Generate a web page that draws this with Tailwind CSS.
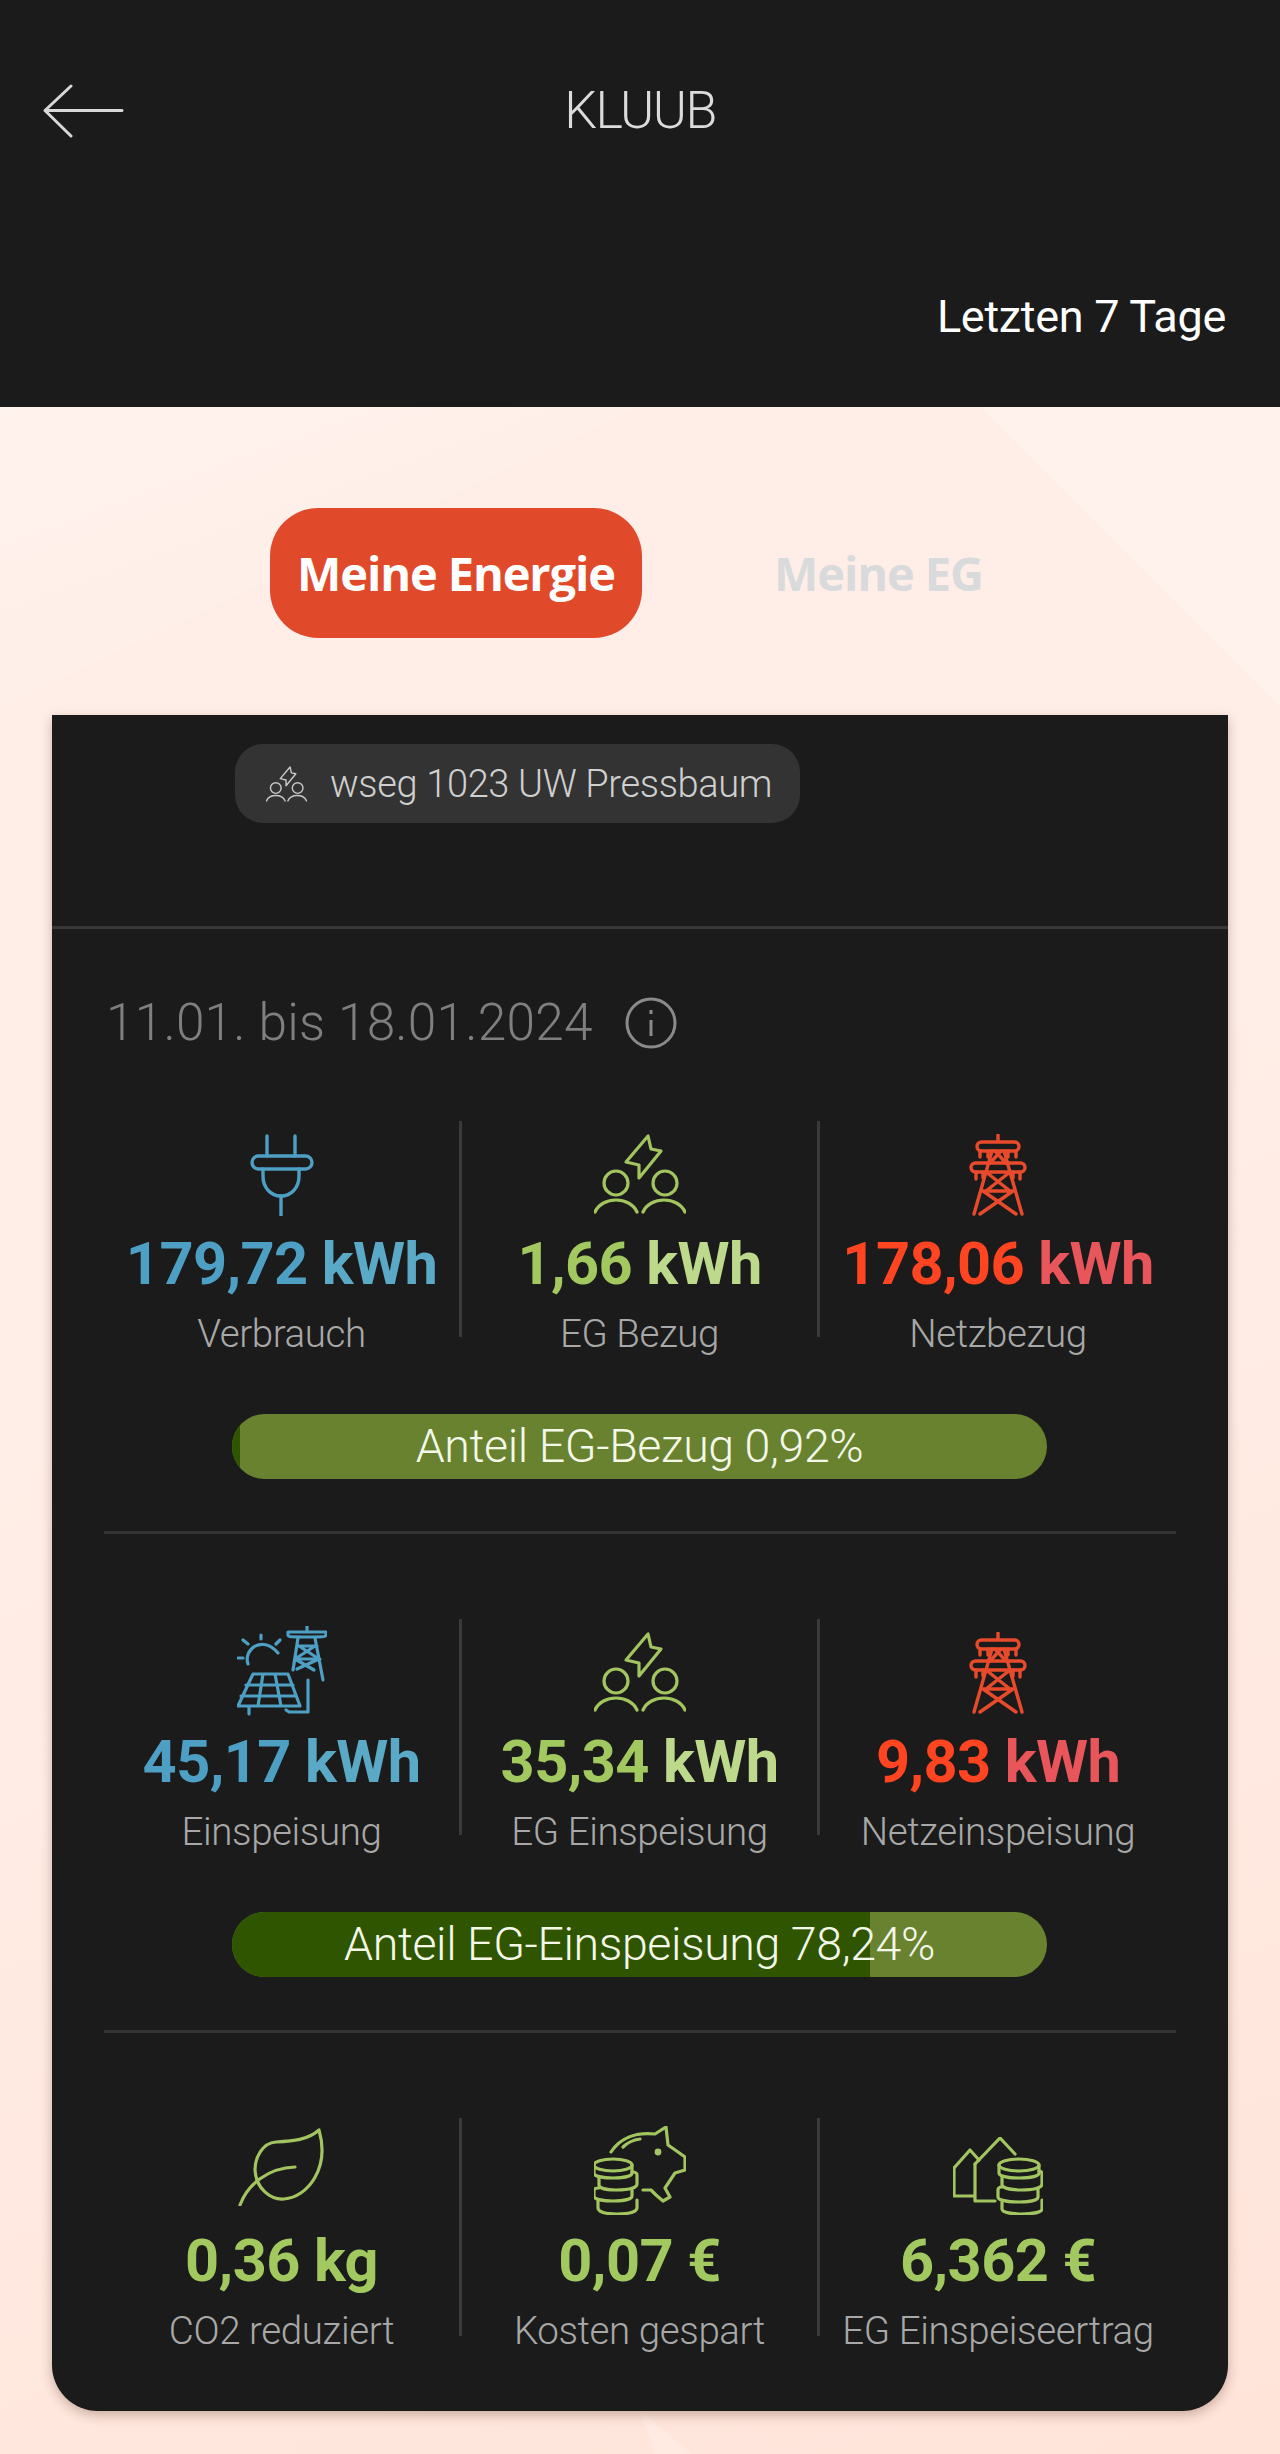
<!DOCTYPE html>
<html><head><meta charset="utf-8"><script src="https://cdn.jsdelivr.net/npm/@tailwindcss/browser@4"></script></head>
<body class="m-0">
<svg width="0" height="0" class="absolute">
<symbol id="people" viewBox="0 0 92 80"><g fill="none" stroke="currentColor" stroke-width="3.2" stroke-linecap="round" stroke-linejoin="round"><path d="M54 2 L32 28 L45 31 L45 44 L67 17 L57 15 Z"/><circle cx="22" cy="49" r="12"/><circle cx="71" cy="49" r="12"/><path d="M1 78 C8 62 36 62 43 78"/><path d="M49 78 C56 62 84 62 91 78"/></g></symbol>
<symbol id="tower" viewBox="0 0 58 82"><g fill="none" stroke="currentColor" stroke-width="3.4" stroke-linecap="round" stroke-linejoin="round"><path d="M29 1 V7"/><rect x="8" y="8" width="42" height="9" rx="4.5"/><rect x="2" y="29" width="54" height="9" rx="4.5"/><path d="M11 17 V23 M47 17 V23 M19 17 V23 M39 17 V23 M7 38 V45 M51 38 V45 M14 38 V44 M44 38 V44"/><path d="M23 17 L5 80 M35 17 L53 80"/><path d="M26 17 L37 29 M32 17 L21 29 M17 38 L41 57 M41 38 L17 57 M14 57 H44 M14 57 L47 80 M44 57 L11 80"/></g></symbol>
<symbol id="plug" viewBox="0 0 64 82"><g fill="none" stroke="currentColor" stroke-width="3.4" stroke-linecap="round" stroke-linejoin="round"><path d="M17 2 V22 M45 2 V22"/><rect x="2" y="22" width="60" height="13" rx="6.5"/><path d="M13 35 V42 C13 54 21 62 31 62 C41 62 49 54 49 42 V35"/><path d="M31 62 V81"/></g></symbol>
<symbol id="solar" viewBox="0 0 90 90"><g fill="none" stroke="currentColor" stroke-width="3.2" stroke-linecap="round" stroke-linejoin="round"><path d="M11 38 C6 24 25 8 41 27"/><path d="M1 32 H6 M6 14 L11 18 M24 9 V13 M43 14 L39 18"/><path d="M16 48 H51 L63 80 H1 Z M9 59 H56 M4 70 H59 M26 48 L21 80 M38 48 L44 80 M12 80 V88"/><path d="M49 84 L52 86 H71 V54"/><path d="M51 6 H89 V9 C89 11 85 11 70 11 C55 11 51 11 51 9 Z M70 0 V6"/><path d="M61 12 L56 44 M78 12 L86 54 M60 20 H80 M58 33 H83 M62 20 L82 33 M78 20 L58 33 M58 33 L77 44 M82 33 L60 43"/></g></symbol>
<symbol id="leaf" viewBox="0 0 88 78"><g fill="none" stroke="currentColor" stroke-width="3.2" stroke-linecap="round" stroke-linejoin="round"><path d="M81 2 C70 12 55 13 38 14 C24 15 17 30 17 42 C18 60 32 72 46 71 C70 69 92 40 81 2 Z"/><path d="M2 77 C10 56 30 40 57 39"/></g></symbol>
<symbol id="pig" viewBox="0 0 92 89"><g fill="none" stroke="currentColor" stroke-width="3.2" stroke-linecap="round" stroke-linejoin="round"><path d="M17 26 C26 12 42 6 61 8 L72 1 L74 19 L84 26 L91 31 V44 L81 47 L71 62 L76 71 L69 75 L62 69 L57 64 H49"/><path d="M29 21 C33 17 39 14 46 13"/><circle cx="64" cy="26" r="1.800" fill="currentColor"/><ellipse cx="19" cy="39" rx="19" ry="6"/><path d="M0 39 V47 C0 50 8 52 19 52 C30 52 38 50 38 47 V39"/><path d="M38 46 C41 46 43 47 43 49 V58 C43 62 34 64 22 64 C12 64 5 62 5 59 V52"/><path d="M5 62 C1 62 0 63 0 65 V70 C0 73 8 75 19 75 C30 75 38 73 38 70 V64"/><path d="M4 75 V82 C4 86 12 88 23 88 C34 88 43 86 43 82 V74"/></g></symbol>
<symbol id="house" viewBox="0 0 90 78"><g fill="none" stroke="currentColor" stroke-width="3.2" stroke-linecap="round" stroke-linejoin="round"><path d="M1 31 L17 13 L26 23"/><path d="M22 27 L47 1 L62 17"/><path d="M1 31 V59 H22 M22 27 V64 H42"/><ellipse cx="66" cy="28" rx="20" ry="6"/><path d="M46 28 V36 C46 39 54 41 66 41 C78 41 86 39 86 36 V28"/><path d="M86 34 C88 34 89 35 89 37 V47 C89 51 80 53 68 53 C58 53 50 51 49 48 V41"/><path d="M49 50 C46 50 45 51 45 53 V60 C45 63 54 65 66 65 C78 65 85 63 85 60 V52"/><path d="M49 65 V72 C49 75 57 77 68 77 C80 77 89 75 89 72 V63"/></g></symbol>
</svg>

<div class="relative w-[1280px] h-[2454px] overflow-hidden bg-[linear-gradient(160deg,#fff8f4_0%,#ffeee7_22%,#ffeee7_50%,#ffe4d9_100%)] font-['Roboto',sans-serif]">
<svg class="absolute left-0 top-[407px]" width="1280" height="2047" viewBox="0 0 1280 2047"><polygon points="980,0 1280,0 1280,300" fill="#fff" opacity=".22"/><polygon points="0,0 640,0 0,300" fill="#fff" opacity=".1"/><polygon points="640,2004 692,2047 655,2047" fill="#fff" opacity=".2"/></svg>

<header class="relative h-[407px] bg-[#1b1b1b] text-white">
  <div class="h-[222px] flex items-center justify-center relative">
    <svg class="absolute left-[42px] top-[84px]" width="82" height="54" viewBox="0 0 82 54"><path d="M80 26.500 H3 M29 2 L3 26.500 L29 52" fill="none" stroke="#d8d8d8" stroke-width="3" stroke-linecap="round" stroke-linejoin="round"/></svg>
    <span class="text-[52px] leading-none font-light text-[#dcdcdc] tracking-[-1.5px]">KLUUB</span>
  </div>
  <div class="pr-[54px] mt-[72px] text-right text-[45px] leading-none font-normal text-white tracking-[-0.3px]">Letzten 7 Tage</div>
</header>

<div class="relative flex pl-[270px] pt-[101px]">
  <div class="w-[372px] h-[130px] rounded-[48px] bg-[#e04a2b] flex items-center justify-center font-['Open_Sans',sans-serif] font-bold text-[47px] tracking-[-1.100px] text-white">Meine Energie</div>
  <div class="ml-[132px] h-[130px] flex items-center font-['Open_Sans',sans-serif] font-bold text-[47px] tracking-[-1.100px] text-[#d8dadb]">Meine EG</div>
</div>

<main class="relative mx-[52px] mt-[77px] w-[1176px] h-[1696px] bg-[#1b1b1b] rounded-b-[46px] shadow-[0_4px_12px_rgba(80,40,20,0.3)]">
  <div class="h-[214px] border-b-[3px] border-[#383838] pt-[29px] pl-[183px]">
    <div class="w-[565px] h-[79px] rounded-[28px] bg-[#333333] flex items-center pl-[31px] text-[#cfcfcf]">
      <svg width="41" height="36" class="text-[#c8c8c8]"><use href="#people"/></svg>
      <span class="ml-[23px] text-[38px] leading-none font-light tracking-[-0.35px]">wseg 1023 UW Pressbaum</span>
    </div>
  </div>
  <div class="flex items-center h-[94px] mt-[47px] pl-[54px]">
    <span class="text-[51.4px] leading-none font-light text-[#7f7f7f] tracking-[0.2px]">11.01. bis 18.01.2024</span>
    <svg class="ml-[32px]" width="52" height="52" viewBox="0 0 52 52" fill="none" stroke="#8a8a8a" stroke-width="3"><circle cx="26" cy="26" r="24"/><path d="M26 23 V39 M26 13 V17"/></svg>
  </div>

  <section class="ml-[52px] mt-[51px] w-[1072px] h-[413px] border-b-[3px] border-[#333333]">
    <div class="flex h-[216px]">
      <div class="w-[358px] border-r-[3px] border-[#3a3a3a] flex flex-col items-center"><div class="h-[114px] shrink-0 pt-[13px]"><svg width="64" height="82" class="text-[#4d9fc4]"><use href="#plug"/></svg></div><div class="shrink-0 text-[59.5px] leading-none font-bold tracking-[-0.6px] whitespace-nowrap text-[#4d9fc4]">179,72 <span class="text-[#5aa9c7]">kWh</span></div><div class="shrink-0 mt-[20px] text-[38.5px] leading-none font-light text-[#a8a8a8] tracking-[-0.4px] whitespace-nowrap">Verbrauch</div></div>
      <div class="w-[358px] border-r-[3px] border-[#3a3a3a] flex flex-col items-center"><div class="h-[114px] shrink-0 pt-[13px]"><svg width="92" height="80" class="text-[#a2c560]"><use href="#people"/></svg></div><div class="shrink-0 text-[59.5px] leading-none font-bold tracking-[-0.6px] whitespace-nowrap text-[#a2c860]">1,66 <span class="text-[#bdd98c]">kWh</span></div><div class="shrink-0 mt-[20px] text-[38.5px] leading-none font-light text-[#a8a8a8] tracking-[-0.4px] whitespace-nowrap">EG Bezug</div></div>
      <div class="w-[356px] flex flex-col items-center"><div class="h-[114px] shrink-0 pt-[13px]"><svg width="58" height="82" class="text-[#e84b2b]"><use href="#tower"/></svg></div><div class="shrink-0 text-[59.5px] leading-none font-bold tracking-[-0.6px] whitespace-nowrap text-[#ff4422]">178,06 <span class="text-[#e8555a]">kWh</span></div><div class="shrink-0 mt-[20px] text-[38.5px] leading-none font-light text-[#a8a8a8] tracking-[-0.4px] whitespace-nowrap">Netzbezug</div></div>
    </div>
    <div class="relative mt-[77px] ml-[128px] w-[815px] h-[65px] rounded-full bg-[#688230] overflow-hidden flex items-center justify-center text-[#f4f8e8] text-[46.5px] font-light tracking-[-0.4px] leading-none">
      <div class="absolute left-0 top-0 bottom-0 w-[8px] bg-[#2f5500]"></div><span class="relative">Anteil EG-Bezug 0,92%</span>
    </div>
  </section>

  <section class="ml-[52px] mt-[85px] w-[1072px] h-[414px] border-b-[3px] border-[#333333]">
    <div class="flex h-[216px]">
      <div class="w-[358px] border-r-[3px] border-[#3a3a3a] flex flex-col items-center"><div class="h-[114px] shrink-0 pt-[7px]"><svg width="90" height="90" class="text-[#4d9fc4]"><use href="#solar"/></svg></div><div class="shrink-0 text-[59.5px] leading-none font-bold tracking-[-0.6px] whitespace-nowrap text-[#4d9fc4]">45,17 <span class="text-[#5aa9c7]">kWh</span></div><div class="shrink-0 mt-[20px] text-[38.5px] leading-none font-light text-[#a8a8a8] tracking-[-0.4px] whitespace-nowrap">Einspeisung</div></div>
      <div class="w-[358px] border-r-[3px] border-[#3a3a3a] flex flex-col items-center"><div class="h-[114px] shrink-0 pt-[13px]"><svg width="92" height="80" class="text-[#a2c560]"><use href="#people"/></svg></div><div class="shrink-0 text-[59.5px] leading-none font-bold tracking-[-0.6px] whitespace-nowrap text-[#a2c860]">35,34 <span class="text-[#bdd98c]">kWh</span></div><div class="shrink-0 mt-[20px] text-[38.5px] leading-none font-light text-[#a8a8a8] tracking-[-0.4px] whitespace-nowrap">EG Einspeisung</div></div>
      <div class="w-[356px] flex flex-col items-center"><div class="h-[114px] shrink-0 pt-[13px]"><svg width="58" height="82" class="text-[#e84b2b]"><use href="#tower"/></svg></div><div class="shrink-0 text-[59.5px] leading-none font-bold tracking-[-0.6px] whitespace-nowrap text-[#ff4422]">9,83 <span class="text-[#e8555a]">kWh</span></div><div class="shrink-0 mt-[20px] text-[38.5px] leading-none font-light text-[#a8a8a8] tracking-[-0.4px] whitespace-nowrap">Netzeinspeisung</div></div>
    </div>
    <div class="relative mt-[77px] ml-[128px] w-[815px] h-[65px] rounded-full bg-[#688230] overflow-hidden flex items-center justify-center text-[#f4f8e8] text-[46.5px] font-light tracking-[-0.4px] leading-none">
      <div class="absolute left-0 top-0 bottom-0 w-[638px] bg-[#2f5500]"></div><span class="relative">Anteil EG-Einspeisung 78,24%</span>
    </div>
  </section>

  <section class="ml-[52px] mt-[85px] w-[1072px] flex h-[218px]">
    <div class="w-[358px] border-r-[3px] border-[#3a3a3a] flex flex-col items-center"><div class="h-[114px] shrink-0 pt-[10px]"><svg width="88" height="78" class="text-[#a2c560]"><use href="#leaf"/></svg></div><div class="shrink-0 text-[59.5px] leading-none font-bold tracking-[-0.6px] whitespace-nowrap text-[#a2c860]">0,36 kg</div><div class="shrink-0 mt-[20px] text-[38.5px] leading-none font-light text-[#a8a8a8] tracking-[-0.4px] whitespace-nowrap">CO2 reduziert</div></div>
    <div class="w-[358px] border-r-[3px] border-[#3a3a3a] flex flex-col items-center"><div class="h-[114px] shrink-0 pt-[8px]"><svg width="92" height="89" class="text-[#a2c560]"><use href="#pig"/></svg></div><div class="shrink-0 text-[59.5px] leading-none font-bold tracking-[-0.6px] whitespace-nowrap text-[#a2c860]">0,07 €</div><div class="shrink-0 mt-[20px] text-[38.5px] leading-none font-light text-[#a8a8a8] tracking-[-0.4px] whitespace-nowrap">Kosten gespart</div></div>
    <div class="w-[356px] flex flex-col items-center"><div class="h-[114px] shrink-0 pt-[19px]"><svg width="90" height="78" class="text-[#a2c560]"><use href="#house"/></svg></div><div class="shrink-0 text-[59.5px] leading-none font-bold tracking-[-0.6px] whitespace-nowrap text-[#a2c860]">6,362 €</div><div class="shrink-0 mt-[20px] text-[38.5px] leading-none font-light text-[#a8a8a8] tracking-[-0.4px] whitespace-nowrap">EG Einspeiseertrag</div></div>
  </section>
</main>
</div>
</body></html>
